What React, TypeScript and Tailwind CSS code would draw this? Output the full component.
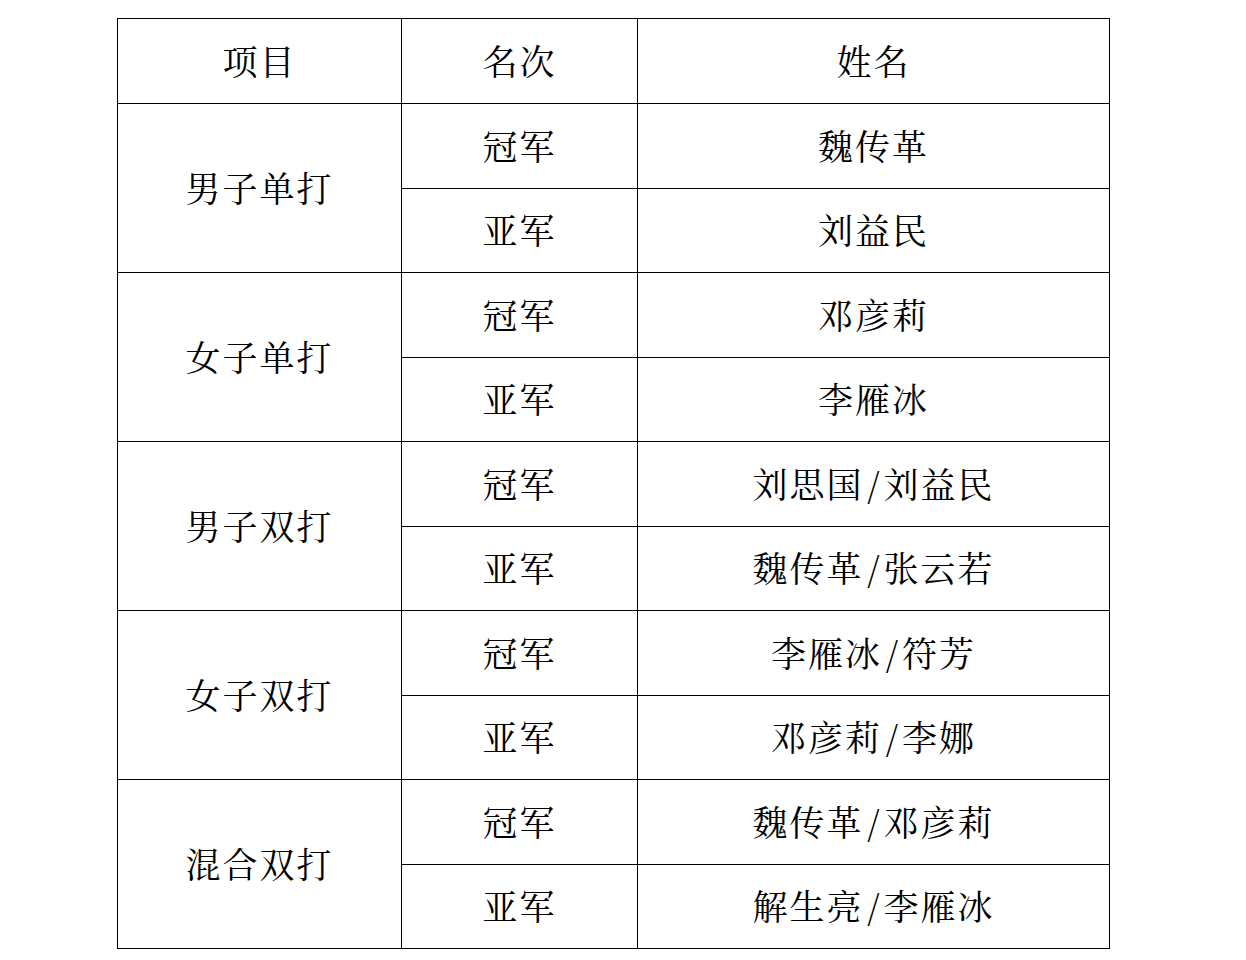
import React from "react";

const groups = [
  { event: "男子单打", rows: [["冠军", "魏传革"], ["亚军", "刘益民"]] },
  { event: "女子单打", rows: [["冠军", "邓彦莉"], ["亚军", "李雁冰"]] },
  { event: "男子双打", rows: [["冠军", "刘思国/刘益民"], ["亚军", "魏传革/张云若"]] },
  { event: "女子双打", rows: [["冠军", "李雁冰/符芳"], ["亚军", "邓彦莉/李娜"]] },
  { event: "混合双打", rows: [["冠军", "魏传革/邓彦莉"], ["亚军", "解生亮/李雁冰"]] },
];

const heights = ["h-[85px]", "h-[85px]", "h-[84px]", "h-[85px]", "h-[84px]", "h-[85px]", "h-[84px]", "h-[85px]", "h-[84px]", "h-[85px]", "h-[84px]"];

function Name({ text }: { text: string }) {
  const parts = text.split("/");
  return (
    <>
      {parts.map((p, i) => (
        <React.Fragment key={i}>
          {i > 0 && <span className="inline-block w-[20px] text-center tracking-normal">/</span>}
          {p}
        </React.Fragment>
      ))}
    </>
  );
}

export default function App() {
  const cell = "border border-black text-center align-middle p-0 pb-[2px] tracking-[2px]";
  let r = 1;
  return (
    <div
      className="w-[1246px] h-[960px] bg-white pt-[18px] pl-[117px] text-black text-[35px] leading-none"
      style={{ fontFamily: '"Noto Serif CJK SC", "Noto Sans CJK SC", serif' }}
    >
      <table className="table-fixed border-collapse w-[992px]">
        <colgroup>
          <col className="w-[284px]" />
          <col className="w-[236px]" />
          <col className="w-[472px]" />
        </colgroup>
        <tbody>
          <tr className={heights[0]}>
            <td className={cell}>项目</td>
            <td className={cell}>名次</td>
            <td className={cell}>姓名</td>
          </tr>
          {groups.map((g) =>
            g.rows.map((row, i) => {
              const h = heights[r++];
              return (
                <tr key={g.event + i} className={h}>
                  {i === 0 && (
                    <td className={cell} rowSpan={2}>
                      {g.event}
                    </td>
                  )}
                  <td className={cell}>{row[0]}</td>
                  <td className={cell}>
                    <Name text={row[1]} />
                  </td>
                </tr>
              );
            })
          )}
        </tbody>
      </table>
    </div>
  );
}
